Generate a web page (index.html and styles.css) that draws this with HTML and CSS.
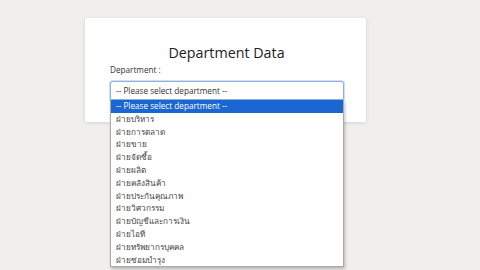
FILE: index.html
```html
<!DOCTYPE html>
<html lang="en">
<head>
    <meta charset="UTF-8">
    <meta name="viewport" content="width=device-width, initial-scale=1.0">
    <title>Department Data</title>
    <link rel="stylesheet" href="styles.css">
</head>
<body>
    <div class="card">
        <h1>Department Data</h1>
        <label class="field-label">Department :</label>
        <div class="select-wrap">
            <div class="select-box">-- Please select department --</div>
            <div class="dropdown">
                <div class="item selected">-- Please select department --</div>
                <div class="item">ฝ่ายบริหาร</div>
                <div class="item">ฝ่ายการตลาด</div>
                <div class="item">ฝ่ายขาย</div>
                <div class="item">ฝ่ายจัดซื้อ</div>
                <div class="item">ฝ่ายผลิต</div>
                <div class="item">ฝ่ายคลังสินค้า</div>
                <div class="item">ฝ่ายประกันคุณภาพ</div>
                <div class="item">ฝ่ายวิศวกรรม</div>
                <div class="item">ฝ่ายบัญชีและการเงิน</div>
                <div class="item">ฝ่ายไอที</div>
                <div class="item">ฝ่ายทรัพยากรบุคคล</div>
                <div class="item">ฝ่ายซ่อมบำรุง</div>
            </div>
        </div>
    </div>
</body>
</html>
```

FILE: styles.css
```css
html {
    min-height: 100%;
}

body {
    margin: 0;
    min-height: 270px;
    background: #f0efee;
    font-family: "Open Sans", "Noto Sans", sans-serif;
    color: #222;
}

.card {
    background: white;
    width: 281px;
    box-sizing: border-box;
    margin: 18px 0 0 85px;
    padding: 25px 23px 22px 25px;
    box-shadow: 0 1px 4px rgba(0,0,0,0.12);
    border-radius: 2px;
}

h1 {
    margin: 0;
    font-size: 14.3px;
    font-weight: 400;
    text-align: center;
    line-height: 20px;
    color: #222;
}

.field-label {
    display: block;
    font-size: 8.2px;
    line-height: 12px;
    color: #333;
    margin-top: 1px;
}

.select-wrap {
    position: relative;
    margin-top: 5px;
    width: 234px;
}

.select-box {
    height: 19px;
    box-sizing: border-box;
    border: 1px solid #8fb0d8;
    border-radius: 3px 3px 0 0;
    box-shadow: 0 0 0 1px #cfe0f2;
    padding: 0 5px;
    font-size: 8.2px;
    line-height: 17px;
    color: #333;
    background: white;
}

.dropdown {
    position: absolute;
    top: 100%;
    left: 0;
    right: 0;
    z-index: 2;
    background: white;
    border: 1px solid #aaa;
    border-top: none;
    box-shadow: 1px 2px 3px rgba(0,0,0,0.25);
}

.item {
    height: 12.8px;
    line-height: 12.8px;
    padding: 0 5px;
    font-size: 8.2px;
    color: #444;
    white-space: nowrap;
}

.item.selected {
    background: #1a66d2;
    color: white;
}
```
